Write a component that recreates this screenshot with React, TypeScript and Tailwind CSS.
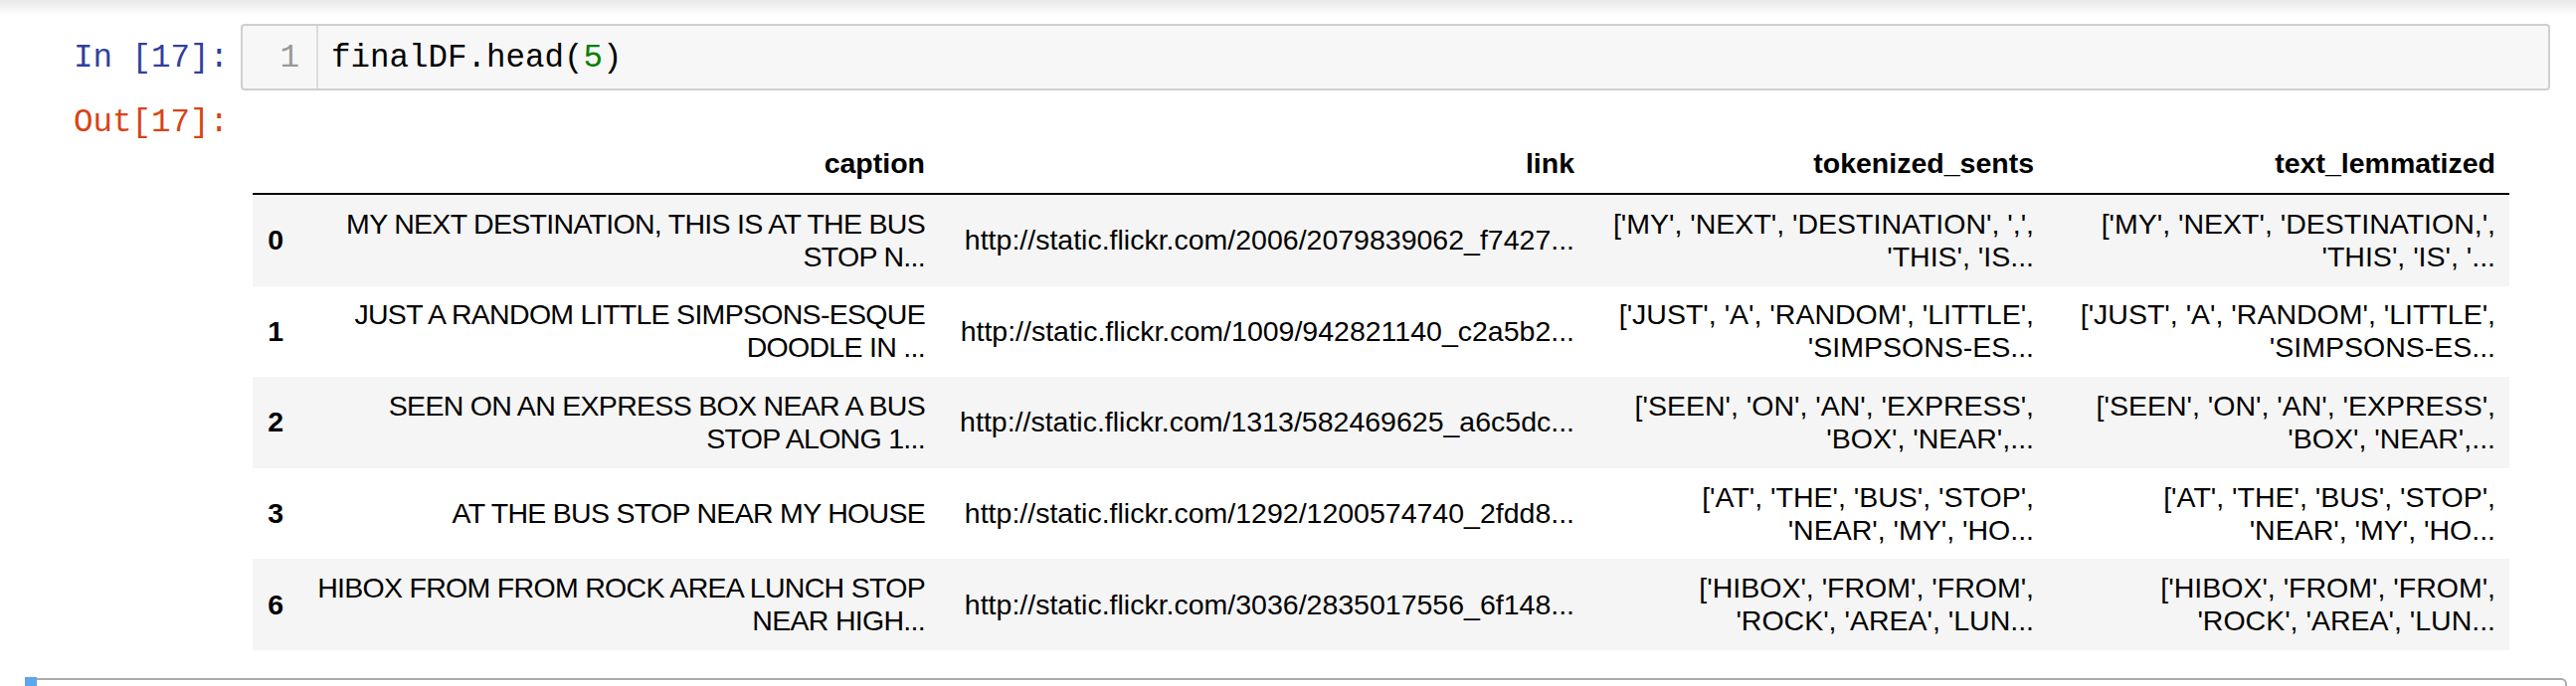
import React from 'react';

type Row = {
  idx: string;
  caption: string[];
  link: string;
  tokens: string[];
  lemmas: string[];
};

const rows: Row[] = [
  {
    idx: '0',
    caption: ['MY NEXT DESTINATION, THIS IS AT THE BUS', 'STOP N...'],
    link: 'http://static.flickr.com/2006/2079839062_f7427...',
    tokens: ["['MY', 'NEXT', 'DESTINATION', ',',", "'THIS', 'IS..."],
    lemmas: ["['MY', 'NEXT', 'DESTINATION,',", "'THIS', 'IS', '..."],
  },
  {
    idx: '1',
    caption: ['JUST A RANDOM LITTLE SIMPSONS-ESQUE', 'DOODLE IN ...'],
    link: 'http://static.flickr.com/1009/942821140_c2a5b2...',
    tokens: ["['JUST', 'A', 'RANDOM', 'LITTLE',", "'SIMPSONS-ES..."],
    lemmas: ["['JUST', 'A', 'RANDOM', 'LITTLE',", "'SIMPSONS-ES..."],
  },
  {
    idx: '2',
    caption: ['SEEN ON AN EXPRESS BOX NEAR A BUS', 'STOP ALONG 1...'],
    link: 'http://static.flickr.com/1313/582469625_a6c5dc...',
    tokens: ["['SEEN', 'ON', 'AN', 'EXPRESS',", "'BOX', 'NEAR',..."],
    lemmas: ["['SEEN', 'ON', 'AN', 'EXPRESS',", "'BOX', 'NEAR',..."],
  },
  {
    idx: '3',
    caption: ['AT THE BUS STOP NEAR MY HOUSE'],
    link: 'http://static.flickr.com/1292/1200574740_2fdd8...',
    tokens: ["['AT', 'THE', 'BUS', 'STOP',", "'NEAR', 'MY', 'HO..."],
    lemmas: ["['AT', 'THE', 'BUS', 'STOP',", "'NEAR', 'MY', 'HO..."],
  },
  {
    idx: '6',
    caption: ['HIBOX FROM FROM ROCK AREA LUNCH STOP', 'NEAR HIGH...'],
    link: 'http://static.flickr.com/3036/2835017556_6f148...',
    tokens: ["['HIBOX', 'FROM', 'FROM',", "'ROCK', 'AREA', 'LUN..."],
    lemmas: ["['HIBOX', 'FROM', 'FROM',", "'ROCK', 'AREA', 'LUN..."],
  },
];

function Lines({ lines }: { lines: string[] }) {
  return (
    <>
      {lines.map((l, i) => (
        <div key={i} className="whitespace-nowrap">
          {l}
        </div>
      ))}
    </>
  );
}

export default function App() {
  const cell = 'px-[14px] py-[12.8px] text-right align-middle';

  return (
    <div className="h-[690px] overflow-hidden bg-white">
      {/* header shadow */}
      <div className="h-[16px] bg-gradient-to-b from-[#e9e9e9] to-white" />

      {/* input cell */}
      <div className="mt-[8px] flex pr-[26px] font-['Liberation_Mono',monospace] text-[32.5px]">
        <div className="w-[242px] shrink-0 pt-[15px] pr-[12px] text-right leading-[40px] text-[#303F9F]">
          In&nbsp;[17]:
        </div>
        <div className="flex flex-1 rounded-[4px] border-2 border-[#cfcfcf] bg-[#f7f7f7]">
          <div className="w-[76px] border-r-2 border-[#dddddd] pt-[13px] pb-[10px] pr-[17px] text-right leading-[40px] text-[#999999]">
            1
          </div>
          <div className="pt-[13px] pb-[10px] pl-[13px] leading-[40px] text-black">
            finalDF.head(<span className="text-[#008000]">5</span>)
          </div>
        </div>
      </div>

      {/* output */}
      <div className="mt-[13px] flex">
        <div className="w-[242px] shrink-0 pr-[12px] text-right font-['Liberation_Mono',monospace] text-[32.5px] leading-[40px] text-[#D84315]">
          Out[17]:
        </div>
        <div className="pl-[12px] pt-[30px]">
          <table className="w-[2269px] table-fixed border-collapse font-['Liberation_Sans',Arial,sans-serif] text-[28.5px] leading-[33px] text-black">
            <colgroup>
              <col className="w-[45px]" />
              <col className="w-[645px]" />
              <col className="w-[653px]" />
              <col className="w-[462px]" />
              <col className="w-[464px]" />
            </colgroup>
            <thead>
              <tr className="border-b-2 border-black">
                <th className="px-[14px] pt-[14px] pb-[13px]" />
                <th className="px-[14px] pt-[14px] pb-[13px] text-right font-bold">caption</th>
                <th className="px-[14px] pt-[14px] pb-[13px] text-right font-bold">link</th>
                <th className="px-[14px] pt-[14px] pb-[13px] text-right font-bold">tokenized_sents</th>
                <th className="px-[14px] pt-[14px] pb-[13px] text-right font-bold">text_lemmatized</th>
              </tr>
            </thead>
            <tbody>
              {rows.map((r, i) => (
                <tr key={r.idx} className={i % 2 === 0 ? 'bg-[#f5f5f5]' : 'bg-white'}>
                  <th className={`${cell} font-bold`}>{r.idx}</th>
                  <td className={`${cell} tracking-[-0.7px]`}>
                    <Lines lines={r.caption} />
                  </td>
                  <td className={`${cell} whitespace-nowrap`}>{r.link}</td>
                  <td className={cell}>
                    <Lines lines={r.tokens} />
                  </td>
                  <td className={cell}>
                    <Lines lines={r.lemmas} />
                  </td>
                </tr>
              ))}
            </tbody>
          </table>
        </div>
      </div>

      {/* next (selected) cell */}
      <div className="mt-[27px] ml-[25px] mr-[9px] flex h-[60px]">
        <div className="w-[12px] bg-[#5ca6ee]" />
        <div className="mt-[1px] flex-1 rounded-tr-[6px] border-t-2 border-r-2 border-[#ababab]" />
      </div>
    </div>
  );
}
